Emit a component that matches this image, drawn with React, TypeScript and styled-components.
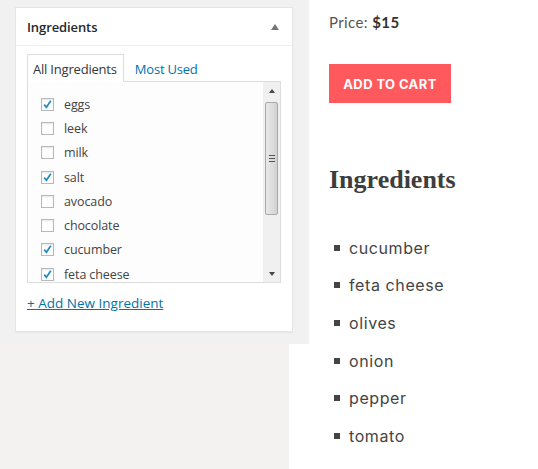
import React from "react";
import styled, { createGlobalStyle } from "styled-components";

const Global = createGlobalStyle`
  html, body { margin: 0; padding: 0; background: #fff; }
  body { width: 538px; height: 469px; overflow: hidden; }
  #root { height: 469px; }
`;

const Page = styled.div`
  display: flex;
  height: 469px;
`;

const LeftCol = styled.div`
  width: 309px;
  display: flex;
  flex-direction: column;
`;

const AdminArea = styled.div`
  height: 344px;
  background: #f1f1f1;
  padding: 7px 16px 0 15px;
  box-sizing: border-box;
`;

const LowerFill = styled.div`
  flex: 1;
  width: 289px;
  background: #f3f2f0;
`;

const Postbox = styled.div`
  background: #fff;
  border: 1px solid #e5e5e5;
  box-shadow: 0 1px 1px rgba(0, 0, 0, 0.04);
  height: 325px;
  box-sizing: border-box;
  font-family: "Open Sans", "Noto Sans", sans-serif;
`;

const PostboxHeader = styled.div`
  height: 37px;
  border-bottom: 1px solid #eee;
  display: flex;
  align-items: center;
  justify-content: space-between;
  padding: 0 13px 0 11px;
`;

const PostboxTitle = styled.h2`
  margin: 0;
  font-size: 13px;
  font-weight: 600;
  color: #23282d;
  letter-spacing: -0.1px;
`;

const Toggle = styled.span`
  width: 0;
  height: 0;
  border-left: 4px solid transparent;
  border-right: 4px solid transparent;
  border-bottom: 6px solid #72777c;
`;

const Inside = styled.div`
  padding: 7px 11px 0 11px;
`;

const Tabs = styled.div`
  display: flex;
  align-items: flex-end;
  height: 28px;
`;

const Tab = styled.div<{ $active?: boolean }>`
  height: 28px;
  box-sizing: border-box;
  display: flex;
  align-items: center;
  padding: 0 6px 0 5px;
  font-size: 13px;
  letter-spacing: -0.2px;
  color: ${(p) => (p.$active ? "#32373c" : "#0073aa")};
  background: ${(p) => (p.$active ? "#fff" : "transparent")};
  border: 1px solid ${(p) => (p.$active ? "#ddd" : "transparent")};
  border-bottom: none;
  margin-bottom: -1px;
  position: relative;
  z-index: 1;
  margin-right: 5px;
`;

const ListBox = styled.div`
  height: 202px;
  box-sizing: border-box;
  border: 1px solid #ddd;
  background: #fdfdfd;
  display: flex;
`;

const List = styled.ul`
  flex: 1;
  list-style: none;
  margin: 0;
  padding: 10px 0 0 13px;
  overflow: hidden;
`;

const Row = styled.li`
  height: 24.3px;
  display: flex;
  align-items: center;
  font-size: 12.5px;
  color: #444;
  letter-spacing: -0.1px;
`;

const Box = styled.span`
  width: 11px;
  height: 11px;
  border: 1px solid #b4b9be;
  background: #fff;
  box-shadow: inset 0 1px 2px rgba(0, 0, 0, 0.1);
  margin-right: 10px;
  display: flex;
  align-items: center;
  justify-content: center;
  flex-shrink: 0;
`;

const Scrollbar = styled.div`
  width: 17px;
  background: #f0f0f0;
  display: flex;
  flex-direction: column;
  align-items: center;
`;

const ArrowBtn = styled.div`
  height: 17px;
  width: 17px;
  display: flex;
  align-items: center;
  justify-content: center;
`;

const Arrow = styled.span<{ $down?: boolean }>`
  width: 0;
  height: 0;
  border-left: 3.5px solid transparent;
  border-right: 3.5px solid transparent;
  ${(p) =>
    p.$down ? "border-top: 4px solid #444;" : "border-bottom: 4px solid #444;"}
`;

const Thumb = styled.div`
  width: 13px;
  height: 113px;
  margin-top: 3px;
  box-sizing: border-box;
  border: 1px solid #a9a9a9;
  border-radius: 2px;
  background: linear-gradient(to right, #e8e8e8, #dcdcdc 60%, #d0d0d0);
  display: flex;
  flex-direction: column;
  align-items: center;
  justify-content: center;
  gap: 2px;
`;

const Grip = styled.span`
  width: 6px;
  height: 1px;
  background: #555;
`;

const Spacer = styled.div`
  flex: 1;
`;

const AddLink = styled.a`
  display: inline-block;
  margin-top: 11px;
  font-size: 13.5px;
  color: #0073aa;
  text-decoration: underline;
  letter-spacing: 0;
`;

const RightCol = styled.div`
  flex: 1;
  padding: 11px 0 0 20px;
  font-family: "Lato", "Inter", sans-serif;
  color: #444;
`;

const Price = styled.div`
  font-size: 15px;
  color: #555;
  line-height: 22px;
  letter-spacing: 0.4px;
  b { color: #333; font-weight: 700; }
`;

const CartButton = styled.button`
  margin-top: 31px;
  width: 122px;
  height: 39px;
  background: #ff585d;
  border: none;
  color: #fff;
  font-family: "Inter", "Lato", sans-serif;
  font-weight: 700;
  font-size: 13px;
  letter-spacing: 0.4px;
  padding: 0;
  display: block;
`;

const Heading = styled.h2`
  margin: 61px 0 0 0;
  font-family: "Liberation Serif", "DejaVu Serif", serif;
  font-weight: 700;
  font-size: 26px;
  line-height: 32px;
  color: #3d3d3d;
`;

const Items = styled.ul`
  list-style: none;
  margin: 33px 0 0 0;
  padding: 0;
`;

const Item = styled.li`
  height: 37.6px;
  display: flex;
  align-items: center;
  font-size: 16px;
  color: #444;
  font-family: "Inter", "Lato", sans-serif;
  letter-spacing: 0.6px;
  &::before {
    content: "";
    width: 6px;
    height: 6px;
    background: #444;
    margin: 0 9px 0 5px;
  }
`;

const Check = () => (
  <svg width="11" height="11" viewBox="0 0 11 11">
    <path d="M2.2 5.6 L4.4 8.3 L8.8 1.8" fill="none" stroke="#1e8cbe" strokeWidth="1.7" />
  </svg>
);

const adminItems: [string, boolean][] = [
  ["eggs", true],
  ["leek", false],
  ["milk", false],
  ["salt", true],
  ["avocado", false],
  ["chocolate", false],
  ["cucumber", true],
  ["feta cheese", true],
];

const shopItems = ["cucumber", "feta cheese", "olives", "onion", "pepper", "tomato"];

export default function App() {
  return (
    <>
      <Global />
      <Page>
        <LeftCol>
          <AdminArea>
            <Postbox>
              <PostboxHeader>
                <PostboxTitle>Ingredients</PostboxTitle>
                <Toggle />
              </PostboxHeader>
              <Inside>
                <Tabs>
                  <Tab $active>All Ingredients</Tab>
                  <Tab>Most Used</Tab>
                </Tabs>
                <ListBox>
                  <List>
                    {adminItems.map(([name, checked]) => (
                      <Row key={name}>
                        <Box>{checked && <Check />}</Box>
                        {name}
                      </Row>
                    ))}
                  </List>
                  <Scrollbar>
                    <ArrowBtn>
                      <Arrow />
                    </ArrowBtn>
                    <Thumb>
                      <Grip />
                      <Grip />
                      <Grip />
                    </Thumb>
                    <Spacer />
                    <ArrowBtn>
                      <Arrow $down />
                    </ArrowBtn>
                  </Scrollbar>
                </ListBox>
                <AddLink href="#">+ Add New Ingredient</AddLink>
              </Inside>
            </Postbox>
          </AdminArea>
          <LowerFill />
        </LeftCol>
        <RightCol>
          <Price>
            Price: <b>$15</b>
          </Price>
          <CartButton>ADD TO CART</CartButton>
          <Heading>Ingredients</Heading>
          <Items>
            {shopItems.map((s) => (
              <Item key={s}>{s}</Item>
            ))}
          </Items>
        </RightCol>
      </Page>
    </>
  );
}
